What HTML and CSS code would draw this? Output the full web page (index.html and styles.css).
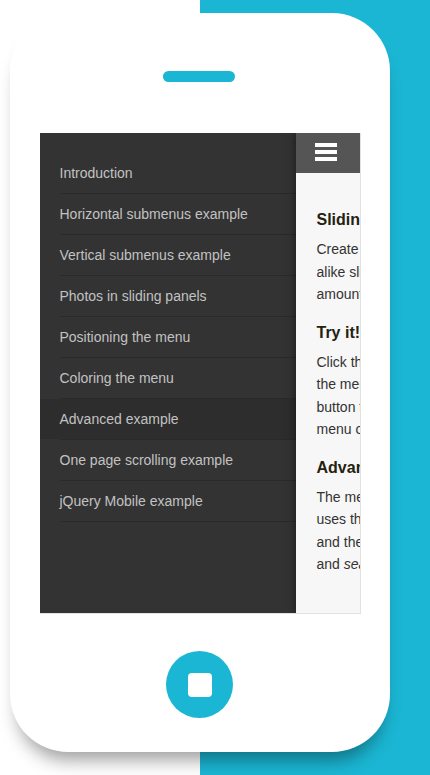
FILE: index.html
```html
<!DOCTYPE html>
<html lang="en">
<head>
<meta charset="utf-8">
<title>Sliding menu demo</title>
<link rel="stylesheet" href="styles.css">
</head>
<body>
<div class="stage">
  <div class="phone">
    <div class="speaker"></div>
    <div class="screen">
      <nav class="menu">
        <ul class="menu-list">
          <li><a href="#">Introduction</a></li>
          <li><a href="#">Horizontal submenus example</a></li>
          <li><a href="#">Vertical submenus example</a></li>
          <li><a href="#">Photos in sliding panels</a></li>
          <li><a href="#">Positioning the menu</a></li>
          <li><a href="#">Coloring the menu</a></li>
          <li class="selected"><a href="#">Advanced example</a></li>
          <li><a href="#">One page scrolling example</a></li>
          <li><a href="#">jQuery Mobile example</a></li>
        </ul>
      </nav>
      <main class="page">
        <div class="header">
          <span class="burger"><i></i><i></i><i></i></span>
        </div>
        <div class="content">
          <h2>Sliding menus</h2>
          <p>Create stunning app look-<br>alike sliding menus with the least<br>amount of effort.</p>
          <h2>Try it!</h2>
          <p>Click the menu icon to open<br>the menu, or click the "+"<br>button to open the second<br>menu on the right.</p>
          <h2>Advanced example</h2>
          <p>The menu in this example<br>uses the search field<br>and the counters add-on<br>and <em>searchfield</em> option.</p>
        </div>
      </main>
    </div>
    <div class="home"><span class="home-square"></span></div>
  </div>
</div>
</body>
</html>
```
FILE: styles.css
```css
* { box-sizing: border-box; }

html, body {
  margin: 0;
  padding: 0;
}

body {
  font-family: "Liberation Sans", Arial, sans-serif;
  background: #fff;
}

.stage {
  width: 430px;
  height: 775px;
  overflow: hidden;
  background: linear-gradient(to right, #fff 200px, #1bb6d3 200px);
  padding: 13px 0 0 10px;
}

.phone {
  width: 380px;
  height: 739px;
  background: #fff;
  border-radius: 58px;
  box-shadow: 0 16px 18px -8px rgba(0, 0, 0, 0.38);
  display: flex;
  flex-direction: column;
  align-items: center;
}

.speaker {
  width: 72px;
  height: 11px;
  border-radius: 6px;
  background: #1bb6d3;
  margin-top: 58px;
  margin-left: -2px;
}

.screen {
  width: 321px;
  height: 481px;
  margin-top: 51px;
  display: flex;
  border-right: 1px solid #e2e2e2;
  border-bottom: 1px solid #e2e2e2;
  overflow: hidden;
}

.menu {
  width: 256px;
  flex: none;
  background: #333;
}

.menu-list {
  list-style: none;
  margin: 0;
  padding: 20px 0 0;
}

.menu-list li {
  padding-bottom: 1px;
  background: linear-gradient(#2a2a2a, #2a2a2a) 20px 100% / calc(100% - 20px) 1px no-repeat;
}

.menu-list a {
  display: block;
  height: 40px;
  line-height: 40px;
  padding-left: 20px;
  font-size: 14px;
  color: #c2c2c2;
  text-decoration: none;
  white-space: nowrap;
}

.menu-list li.selected a {
  background: #2d2d2d;
}

.page {
  flex: 1;
  min-width: 0;
  background: #f7f7f7;
  box-shadow: 0 0 10px rgba(0, 0, 0, 0.55);
  overflow: hidden;
}

.header {
  height: 40px;
  background: #555;
  padding: 10px 0 0 19px;
}

.burger {
  display: flex;
  flex-direction: column;
  gap: 3px;
  width: 22px;
}

.burger i {
  display: block;
  height: 4px;
  background: #fff;
}

.content {
  padding: 0 0 0 21px;
  white-space: nowrap;
}

.content h2 {
  font-size: 16px;
  line-height: 20px;
  font-weight: bold;
  color: #24220f;
  margin: 17px 0 8px;
}

.content h2:first-child {
  margin-top: 37px;
}

.content p {
  font-size: 14px;
  line-height: 22.5px;
  color: #333;
  margin: 0;
}

.home {
  width: 67px;
  height: 67px;
  border-radius: 50%;
  background: #1bb6d3;
  margin-top: 37px;
  margin-left: -1px;
  display: flex;
  align-items: center;
  justify-content: center;
}

.home-square {
  width: 24px;
  height: 24px;
  border-radius: 4px;
  background: #fff;
}
```
